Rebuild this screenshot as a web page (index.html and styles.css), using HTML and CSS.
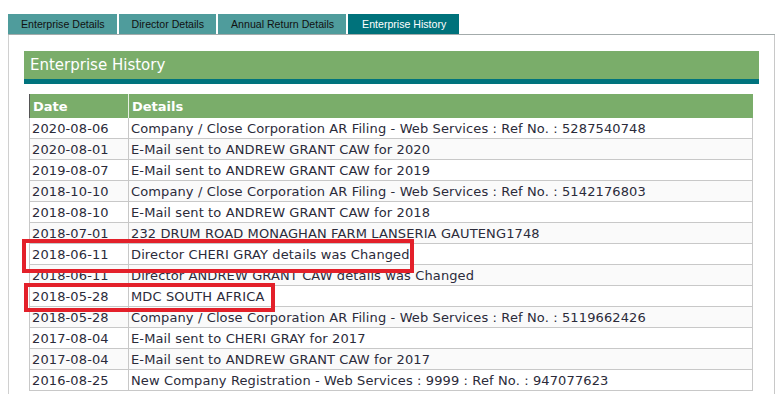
FILE: index.html
```html
<!DOCTYPE html>
<html lang="en">

<head>
    <meta charset="UTF-8">
    <meta name="viewport" content="width=device-width, initial-scale=1.0">
    <title>Enterprise History</title>
    <link rel="stylesheet" href="styles.css">
</head>

<body>
    <div class="tabs">
        <div class="tab">Enterprise Details</div>
        <div class="tab">Director Details</div>
        <div class="tab">Annual Return Details</div>
        <div class="tab active">Enterprise History</div>
    </div>

    <div class="panel">
        <h2 class="panel-title">Enterprise History</h2>

        <div class="history">
            <table class="history-table">
                <thead>
                    <tr>
                        <th class="col-date">Date</th>
                        <th>Details</th>
                    </tr>
                </thead>
                <tbody>
                    <tr><td>2020-08-06</td><td>Company / Close Corporation AR Filing - Web Services : Ref No. : 5287540748</td></tr>
                    <tr><td>2020-08-01</td><td>E-Mail sent to ANDREW GRANT CAW for 2020</td></tr>
                    <tr><td>2019-08-07</td><td>E-Mail sent to ANDREW GRANT CAW for 2019</td></tr>
                    <tr><td>2018-10-10</td><td>Company / Close Corporation AR Filing - Web Services : Ref No. : 5142176803</td></tr>
                    <tr><td>2018-08-10</td><td>E-Mail sent to ANDREW GRANT CAW for 2018</td></tr>
                    <tr><td>2018-07-01</td><td>232 DRUM ROAD MONAGHAN FARM LANSERIA GAUTENG1748</td></tr>
                    <tr><td>2018-06-11</td><td>Director CHERI GRAY details was Changed</td></tr>
                    <tr><td>2018-06-11</td><td>Director ANDREW GRANT CAW details was Changed</td></tr>
                    <tr><td>2018-05-28</td><td>MDC SOUTH AFRICA</td></tr>
                    <tr><td>2018-05-28</td><td>Company / Close Corporation AR Filing - Web Services : Ref No. : 5119662426</td></tr>
                    <tr><td>2017-08-04</td><td>E-Mail sent to CHERI GRAY for 2017</td></tr>
                    <tr><td>2017-08-04</td><td>E-Mail sent to ANDREW GRANT CAW for 2017</td></tr>
                    <tr><td>2016-08-25</td><td>New Company Registration - Web Services : 9999 : Ref No. : 947077623</td></tr>
                </tbody>
            </table>

            <!-- highlight boxes drawn over the rows -->
            <div class="mark mark-one"></div>
            <div class="mark mark-two"></div>
        </div>
    </div>
</body>

</html>
```

FILE: styles.css
```css
body {
    margin: 0;
    background-color: #fff;
    font-family: "DejaVu Sans", Verdana, sans-serif;
    color: #333;
}

.tabs {
    display: flex;
    gap: 2px;
    margin: 0 4px 0 8px;
    padding-top: 14px;
    border-bottom: 1px solid #a3abab;
}

.tab {
    height: 20px;
    line-height: 20px;
    padding: 0 12px 0 13px;
    background-color: #4f9c9c;
    color: #111;
    font-family: "Liberation Sans", Arial, sans-serif;
    font-size: 10.6px;
}

.tab.active {
    padding: 0 13px 0 14px;
    background-color: #00727b;
    color: #fff;
}

.panel {
    margin: 0 4px 0 8px;
    padding: 16px 15px 0 15px;
    border-left: 1px solid #d0d0d0;
    border-right: 1px solid #c8c8c8;
    height: 359px;
    box-sizing: border-box;
}

.panel-title {
    margin: 0;
    height: 28px;
    line-height: 28px;
    padding-left: 6px;
    background-color: #7aad6a;
    border-bottom: 5px solid #00737d;
    color: #fff;
    font-size: 15px;
    font-weight: normal;
}

.history {
    position: relative;
    margin: 10px 6px 0 5px;
}

.history-table {
    width: 100%;
    border-collapse: collapse;
    font-size: 13px;
    letter-spacing: 0.12px;
}

.history-table th {
    height: 24px;
    padding: 0 3px;
    background-color: #7aad6a;
    color: #fff;
    text-align: left;
    font-weight: bold;
    letter-spacing: 0;
    border-left: 1px solid #e8f0e4;
}

.history-table th.col-date {
    width: 92px;
    border-left: 1px solid #555;
}

.history-table td {
    height: 20px;
    padding: 0 2px;
    border: 1px solid #c8c8c8;
    border-top: none;
    white-space: nowrap;
    color: #2b2b3a;
}

.history-table tbody tr:nth-child(even) td {
    background-color: #fafafa;
}

.mark {
    position: absolute;
    border: 4px solid #e3202a;
    box-sizing: border-box;
}

.mark-one {
    left: -7px;
    top: 145px;
    width: 392px;
    height: 34px;
}

.mark-two {
    left: -5px;
    top: 189px;
    width: 251px;
    height: 29px;
}
```
